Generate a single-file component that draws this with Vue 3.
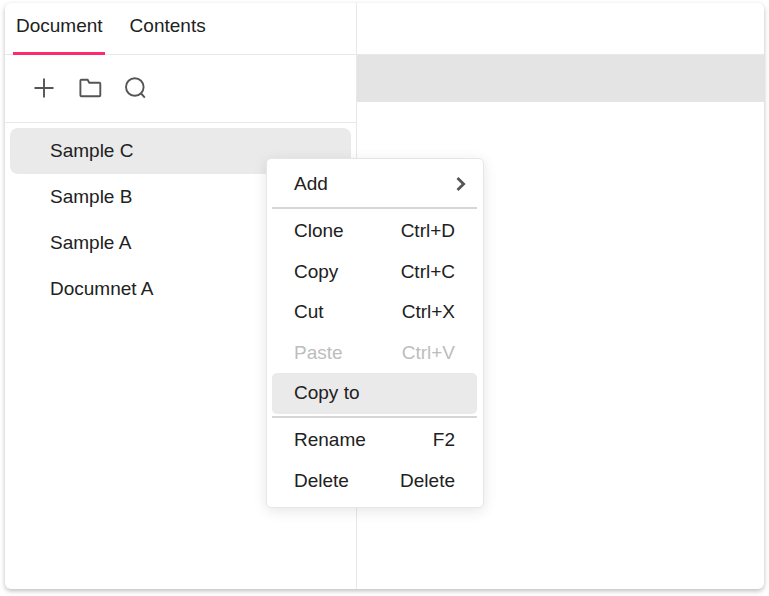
<script setup>
import { ref } from 'vue'

const tabs = ['Document', 'Contents']
const activeTab = ref('Document')
const documents = ['Sample C', 'Sample B', 'Sample A', 'Documnet A']
const selected = ref('Sample C')
const menu = [
  { label: 'Add', submenu: true },
  { divider: true },
  { label: 'Clone', keys: 'Ctrl+D' },
  { label: 'Copy', keys: 'Ctrl+C' },
  { label: 'Cut', keys: 'Ctrl+X' },
  { label: 'Paste', keys: 'Ctrl+V', disabled: true },
  { label: 'Copy to', active: true },
  { divider: true },
  { label: 'Rename', keys: 'F2' },
  { label: 'Delete', keys: 'Delete' },
]
</script>

<template>
  <div class="window">
    <aside class="sidebar">
      <nav class="tabs">
        <button
          v-for="tab in tabs"
          :key="tab"
          class="tab"
          :class="{ active: tab === activeTab }"
          @click="activeTab = tab"
        >{{ tab }}</button>
      </nav>
      <div class="toolbar">
        <button class="tool" aria-label="New document">
          <svg viewBox="0 0 24 24"><path d="M12 2.5v19M2.5 12h19" /></svg>
        </button>
        <button class="tool" aria-label="New folder">
          <svg viewBox="0 0 24 24"><path d="M3.4 3.8h6.2l1.7 3h10a1 1 0 0 1 1 1v11.4a1 1 0 0 1-1 1H3.4a1 1 0 0 1-1-1V4.8a1 1 0 0 1 1-1z" /></svg>
        </button>
        <button class="tool" aria-label="Search">
          <svg viewBox="0 0 24 24"><circle cx="10.8" cy="11" r="8.8" /><path d="M16.6 17l4.2 4.6" /></svg>
        </button>
      </div>
      <ul class="documents">
        <li v-for="name in documents" :key="name">
          <button class="document" :class="{ selected: name === selected }" @click="selected = name">{{ name }}</button>
        </li>
      </ul>
    </aside>
    <main class="content">
      <div class="content-head"></div>
      <div class="band"></div>
      <div class="page"></div>
    </main>
    <div class="menu" role="menu">
      <template v-for="(item, i) in menu" :key="i">
        <hr v-if="item.divider" class="divider" />
        <button v-else class="item" :class="{ hover: item.active }" role="menuitem" :disabled="item.disabled">
          <span>{{ item.label }}</span>
          <svg v-if="item.submenu" class="chevron" viewBox="0 0 10 14"><path d="M1.5 1L7.6 7l-6.1 6" /></svg>
          <span v-else>{{ item.keys }}</span>
        </button>
      </template>
    </div>
  </div>
</template>

<style>
body {
  background: #fff;
}
</style>

<style scoped>
.window {
  position: relative;
  display: flex;
  box-sizing: border-box;
  min-height: calc(100vh - 10px);
  margin: 3px 5px 7px;
  border-radius: 6px;
  background: #fff;
  box-shadow: 0 2px 5px rgba(0, 0, 0, 0.26);
  color: #212121;
  font: 19px/24px "Liberation Sans", Arial, sans-serif;
}
button {
  margin: 0;
  padding: 0;
  border: 0;
  background: none;
  color: inherit;
  font: inherit;
  text-align: left;
}
.sidebar {
  box-sizing: border-box;
  flex: 0 0 352px;
  border-right: 1px solid #e8e8e8;
}
.tabs {
  display: flex;
  gap: 22px;
  box-sizing: border-box;
  height: 52px;
  padding-left: 8px;
  border-bottom: 1px solid #e8e8e8;
}
.tab {
  height: 52px;
  padding: 0 2px 4px 3px;
  border-bottom: 3px solid transparent;
}
.tab.active {
  border-bottom-color: #ff2a6d;
}
.toolbar {
  display: flex;
  align-items: center;
  gap: 22px;
  height: 66px;
  padding: 0 0 1px 27px;
  border-bottom: 1px solid #e8e8e8;
}
.tool,
.tool svg {
  display: block;
  width: 24px;
  height: 24px;
}
svg {
  fill: none;
  stroke: #555;
  stroke-width: 1.9;
}
.documents {
  margin: 0;
  padding: 5px;
  list-style: none;
}
.document {
  display: block;
  width: 100%;
  height: 46px;
  padding-left: 40px;
  border-radius: 8px;
}
.document.selected {
  background: #eaeaea;
}
.content {
  display: flex;
  flex: 1;
  flex-direction: column;
}
.content-head {
  height: 51px;
  border-bottom: 1px solid #e8e8e8;
}
.band {
  height: 47px;
  background: #e4e4e4;
}
.page {
  flex: 1;
}
.menu {
  position: absolute;
  top: 155px;
  left: 261px;
  display: flex;
  flex-direction: column;
  box-sizing: border-box;
  width: 218px;
  height: 350px;
  padding: 5px 6px 6px 5px;
  border: 1px solid #e6e6e6;
  border-radius: 5px;
  background: #fff;
  box-shadow: 0 3px 14px rgba(0, 0, 0, 0.1);
}
.item {
  display: flex;
  flex: 1;
  align-items: center;
  justify-content: space-between;
  padding: 0 22px;
  border-radius: 5px;
}
.item.hover {
  background: #eaeaea;
}
.item:disabled {
  color: #bdbdbd;
}
.divider {
  width: 100%;
  height: 2px;
  margin: 2px 0;
  border: 0;
  background: #d6d6d6;
}
.chevron {
  width: 10px;
  height: 14px;
  margin-right: -11px;
  stroke-width: 2.8;
}
</style>
